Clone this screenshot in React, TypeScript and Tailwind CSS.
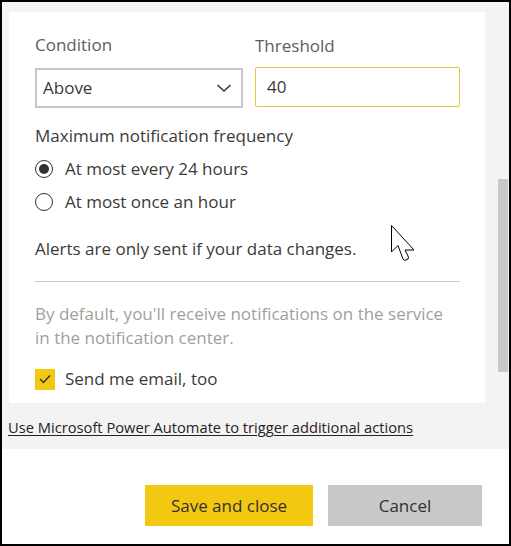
import React, { useState } from "react";

function Radio({ checked, label, onClick }: { checked: boolean; label: string; onClick: () => void }) {
  return (
    <button onClick={onClick} className="flex items-center h-[20px] text-left">
      <span className="w-[18px] h-[18px] rounded-full border-[1.5px] border-[#323130] flex items-center justify-center bg-white">
        {checked && <span className="w-[10px] h-[10px] rounded-full bg-[#323130]" />}
      </span>
      <span className="ml-[12px] text-[#3b3a39]">{label}</span>
    </button>
  );
}

function Cursor() {
  return (
    <svg className="absolute left-[381px] top-[212px]" width="26" height="40" viewBox="0 0 26 40">
      <path
        d="M1.5 1.5 L1.5 28 L8 21.5 L13 35 Q14 37 16 36 L18 35 Q19 34 18 32 L15 26 L24 26 Z"
        fill="white"
        stroke="black"
        strokeWidth="1"
        strokeLinejoin="round"
      />
    </svg>
  );
}

export default function App() {
  const [freq, setFreq] = useState("24h");
  const [email, setEmail] = useState(true);

  return (
    <div
      className="w-[511px] h-[546px] border-2 border-black bg-white flex flex-col text-[17px] leading-[20px]"
      style={{ fontFamily: '"Open Sans", "Liberation Sans", sans-serif' }}
    >
      {/* scrolling dialog body */}
      <div className="h-[447px] bg-[#f3f3f3] flex flex-col">
        <div className="flex h-[401px]">
          <div className="relative ml-[7px] mt-[10px] w-[476px] h-[391px] bg-white pl-[26px] pr-[25px] pt-[23px]">
            <div className="flex gap-[12px]">
              <div className="w-[208px]">
                <div className="text-[#605e5c]">Condition</div>
                <div className="mt-[13px] h-[40px] border-2 border-[#c8c8c8] flex items-center justify-between pl-[6px] pr-[9px] text-[#3b3a39]">
                  <span>Above</span>
                  <svg width="16" height="10" viewBox="0 0 16 10">
                    <path d="M1.5 2 L8 8 L14.5 2" fill="none" stroke="#3b3a39" strokeWidth="1.6" />
                  </svg>
                </div>
              </div>
              <div className="w-[205px]">
                <div className="text-[#605e5c] mt-px">Threshold</div>
                <div className="mt-[11px] h-[40px] border border-[#e9c33f] rounded-[2px] flex items-center pl-[11px] text-[#3b3a39]">
                  40
                </div>
              </div>
            </div>

            <div className="mt-[18px] text-[#3b3a39]">Maximum notification frequency</div>
            <div className="mt-[13px] flex flex-col gap-[13px]">
              <Radio checked={freq === "24h"} label="At most every 24 hours" onClick={() => setFreq("24h")} />
              <Radio checked={freq === "1h"} label="At most once an hour" onClick={() => setFreq("1h")} />
            </div>

            <div className="mt-[27px] text-[#3b3a39]">Alerts are only sent if your data changes.</div>
            <div className="mt-[22px] h-px w-[425px] bg-[#c8c8c8]" />

            <div className="mt-[20px] leading-[24px] text-[#a19f9d] w-[425px]">
              By default, you'll receive notifications on the service in the notification center.
            </div>

            <button onClick={() => setEmail(!email)} className="mt-[19px] flex items-center h-[20px]">
              <span className="w-[20px] h-[21px] bg-[#f2c811] flex items-center justify-center">
                {email && (
                  <svg width="12" height="10" viewBox="0 0 12 10">
                    <path d="M1 5 L4.5 8.5 L11 1.5" fill="none" stroke="#323130" strokeWidth="1.4" />
                  </svg>
                )}
              </span>
              <span className="ml-[10px] text-[#3b3a39]">Send me email, too</span>
            </button>

            <Cursor />
          </div>
          {/* scrollbar */}
          <div className="w-[24px] pl-[13px] pt-[177px]">
            <div className="w-[10px] h-[193px] bg-[#c8c8c8]" />
          </div>
        </div>
        <a href="#" className="mt-[14px] ml-[6px] text-[14.7px] underline text-[#252423] underline-offset-2">
          Use Microsoft Power Automate to trigger additional actions
        </a>
      </div>

      {/* footer */}
      <div className="flex-1 flex justify-end items-start pt-[36px] pr-[27px] gap-[15px]">
        <button className="w-[168px] h-[41px] bg-[#f2c811] text-[#323130]">Save and close</button>
        <button className="w-[154px] h-[41px] bg-[#c8c8c8] text-[#323130]">Cancel</button>
      </div>
    </div>
  );
}
